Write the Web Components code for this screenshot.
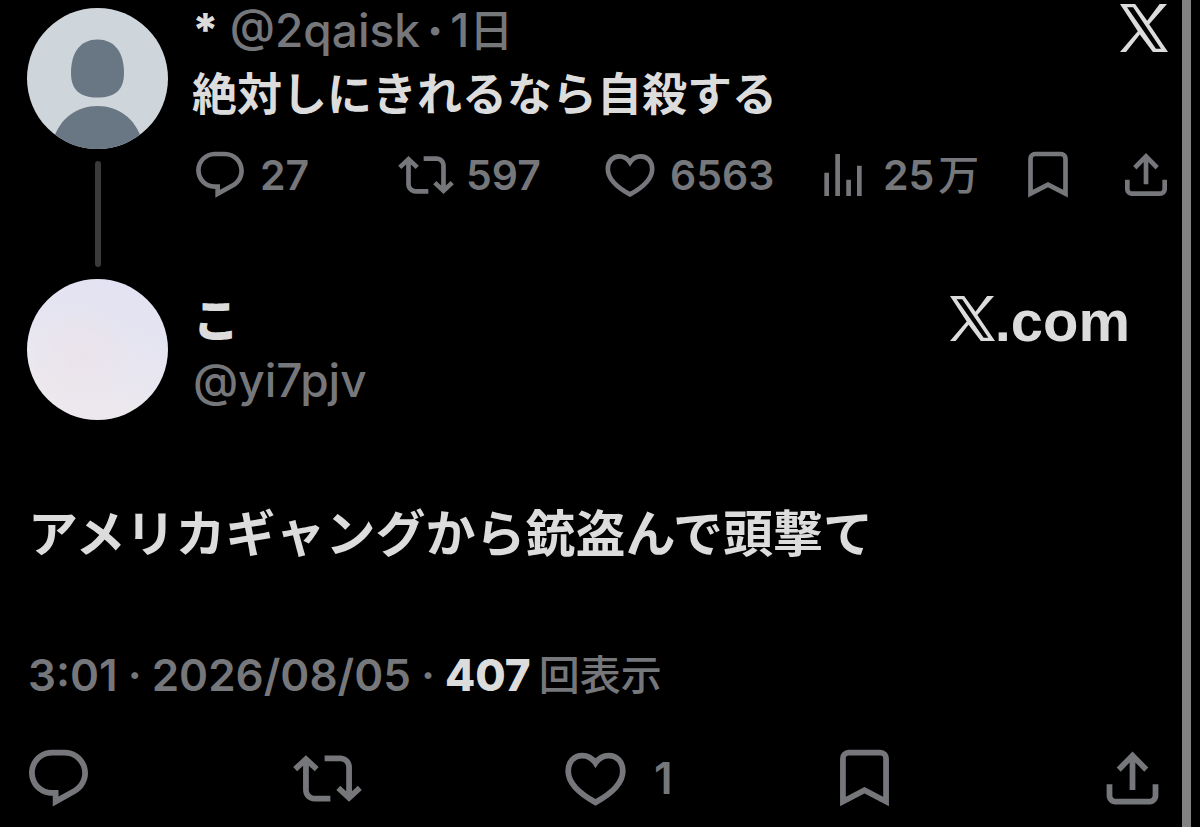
<!DOCTYPE html>
<html lang="ja">
<head>
<meta charset="utf-8">
<meta name="viewport" content="width=device-width, initial-scale=1">
<title>Thread</title>
<style>
  body {
    margin: 0;
    background: #000;
    color: #dcdcdc;
    font-family: Inter, "Noto Sans CJK JP", sans-serif;
    font-weight: 500;
  }
</style>
</head>
<body>
<thread-page>
  <thread-post>
    <default-avatar slot="avatar"></default-avatar>
    <post-author slot="author" name="*" handle="@2qaisk" age="1" unit="日"></post-author>
    <x-logo slot="logo"></x-logo>
    絶対しにきれるなら自殺する
    <action-bar slot="actions" class="compact">
      <action-button icon="reply" label="返信">27</action-button>
      <action-button icon="repost" label="リポスト">597</action-button>
      <action-button icon="like" label="いいね">6563</action-button>
      <action-button icon="views" label="表示">25<span>万</span></action-button>
      <action-button icon="bookmark" label="ブックマーク"></action-button>
      <action-button icon="share" label="共有"></action-button>
    </action-bar>
  </thread-post>

  <focal-post name="こ" handle="@yi7pjv">
    アメリカギャングから銃盗んで頭撃て
    <post-meta slot="meta" time="3:01" date="2026/08/05" views="407"></post-meta>
    <action-bar slot="actions">
      <action-button icon="reply" label="返信"></action-button>
      <action-button icon="repost" label="リポスト"></action-button>
      <action-button icon="like" label="いいね">1</action-button>
      <action-button icon="bookmark" label="ブックマーク"></action-button>
      <action-button icon="share" label="共有"></action-button>
    </action-bar>
  </focal-post>
</thread-page>

<script>
const GREY = "#76777b";

const icons = {
  reply: `<path d="M1.751 10c0-4.42 3.584-8 8.005-8h4.366c4.49 0 8.129 3.64 8.129 8.13 0 2.96-1.607 5.68-4.196 7.11l-8.054 4.46v-3.69h-.067c-4.49.1-8.183-3.51-8.183-8.01zm8.005-6c-3.317 0-6.005 2.69-6.005 6 0 3.37 2.77 6.08 6.138 6.01l.351-.01h1.761v2.3l5.087-2.81c1.951-1.08 3.163-3.13 3.163-5.36 0-3.39-2.744-6.13-6.129-6.13H9.756z"/>`,
  repost: `<path d="M4.5 3.88l4.432 4.14-1.364 1.46L5.5 7.55V16c0 1.1.896 2 2 2H13v2H7.5c-2.209 0-4-1.79-4-4V7.55L1.432 9.48.068 8.02 4.5 3.88zM16.5 6H11V4h5.5c2.209 0 4 1.79 4 4v8.45l2.068-1.93 1.364 1.46-4.432 4.14-4.432-4.14 1.364-1.46 2.068 1.93V8c0-1.1-.896-2-2-2z"/>`,
  like: `<path fill="none" stroke="currentColor" stroke-width="2" stroke-miterlimit="10" d="M12 6.6C10.9 4.9 9.3 4 7.4 4 4.5 4 2.5 6.3 2.5 9.4 2.5 14 6.7 17.4 12 20.3c5.3-2.9 9.5-6.3 9.5-10.9C21.5 6.3 19.5 4 16.6 4 14.7 4 13.1 4.9 12 6.6z"/>`,
  views: `<path d="M4 11h2v10H4zM8.7 3h2v18h-2zM13.4 14h2v7h-2zM18 8h2v13h-2z"/>`,
  bookmark: `<path fill="none" stroke="currentColor" stroke-width="2" stroke-miterlimit="10" d="M4.5 5c0-1.1.9-2 2-2h11c1.1 0 2 .9 2 2v15L12 16.1 4.5 20z"/>`,
  share: `<path d="M12 2.59l5.5 5.6-1.41 1.42L13 6.41V16h-2V6.41L7.9 9.61 6.5 8.19zM21 14v4c0 1.66-1.34 3-3 3H6c-1.66 0-3-1.34-3-3v-4h2v4c0 .55.45 1 1 1h12c.55 0 1-.45 1-1v-4z"/>`
};

function render(el, html) {
  el.attachShadow({ mode: "open" });
  const template = document.createElement("template");
  template.innerHTML = html;
  el.shadowRoot.appendChild(template.content.cloneNode(true));
}

class ThreadPage extends HTMLElement {
  constructor() {
    super();
    render(this, `
      <style>
        :host {
          display: block;
          box-sizing: border-box;
          min-height: 100vh;
          padding-right: 9px;
          background: #000;
        }
        main {
          box-sizing: border-box;
          min-height: 100vh;
          border-right: 9px solid #828282;
        }
      </style>
      <main><slot></slot></main>
    `);
  }
}

class XLogo extends HTMLElement {
  constructor() {
    super();
    render(this, `
      <style>
        :host { display: block; width: 48px; flex: none; }
        svg { display: block; width: 100%; fill: currentColor; }
      </style>
      <svg viewBox="0 0 143 143" role="img" aria-label="X">
        <path fill-rule="evenodd" d="M0 0H45L81 50 118 0H140L87 60 143 143H98L59 91 18 143H0L53 81zM21 10 107 133H122L39 10z"/>
      </svg>
    `);
  }
}

class DefaultAvatar extends HTMLElement {
  constructor() {
    super();
    render(this, `
      <style>
        :host { display: block; width: 141px; border-radius: 50%; overflow: hidden; }
        svg { display: block; width: 100%; }
      </style>
      <svg viewBox="0 0 141 141" role="img" aria-label="avatar">
        <path fill="#ced5db" d="M0 0h141v141H0z"/>
        <path fill="#697683" d="M70.5 31.5C88 31.5 97 45 97 65C97 82 88 89.5 70.5 89.5S44 82 44 65C44 45 53 31.5 70.5 31.5z"/>
        <path fill="#697683" d="M26 132C33 110 50 98 70.5 98S108 110 115 132V141H26z"/>
      </svg>
    `);
  }
}

class PostAuthor extends HTMLElement {
  constructor() {
    super();
    render(this, `
      <style>
        :host { display: flex; gap: 7px; font-size: 46px; line-height: 60px; color: ${GREY}; white-space: nowrap; }
        b { color: #dcdcdc; font-weight: 800; margin-right: 4px; }
        .dot { font-weight: 800; }
        .unit { font-size: 44px; }
      </style>
      <b>${this.getAttribute("name")}</b>
      <span>${this.getAttribute("handle")}</span>
      <span class="dot">·</span>
      <time>${this.getAttribute("age")}<span class="unit">${this.getAttribute("unit")}</span></time>
    `);
  }
}

class ThreadPost extends HTMLElement {
  constructor() {
    super();
    render(this, `
      <style>
        :host { display: block; }
        article { display: flex; gap: 24px; padding: 0 8px 0 27px; }
        .rail { display: flex; flex-direction: column; align-items: center; flex: none; padding: 8px 0 12px; gap: 12px; }
        .line { width: 6px; min-height: 106px; flex: 1; border-radius: 3px; background: #3a3a3c; }
        .content { flex: 1; min-width: 0; }
        header { display: flex; justify-content: space-between; padding-right: 6px; }
        ::slotted(x-logo) { margin-top: 4px; }
        p { margin: 0 0 18px; font-size: 45px; font-weight: 700; line-height: 68px; }
      </style>
      <article>
        <div class="rail">
          <slot name="avatar"></slot>
          <div class="line"></div>
        </div>
        <div class="content">
          <header>
            <slot name="author"></slot>
            <slot name="logo"></slot>
          </header>
          <p><slot></slot></p>
          <slot name="actions"></slot>
        </div>
      </article>
    `);
  }
}

class FocalPost extends HTMLElement {
  constructor() {
    super();
    render(this, `
      <style>
        :host { display: block; }
        header { display: flex; align-items: center; gap: 25px; padding: 0 52px 0 27px; }
        .photo {
          width: 141px;
          height: 141px;
          flex: none;
          border-radius: 50%;
          background: radial-gradient(circle at 38% 55%, #ebe3ea 0%, transparent 45%), linear-gradient(200deg, #e2e2f2 10%, #e6e5f1 45%, #ece8ee 75%);
        }
        .names { flex: 1; font-size: 46px; line-height: 60px; }
        .name { font-weight: 800; }
        .handle { color: ${GREY}; }
        .brand {
          display: flex;
          align-items: baseline;
          align-self: flex-start;
          color: #dcdcdc;
          font-family: "Liberation Sans", Arial, sans-serif;
          font-size: 58px;
          font-weight: 700;
          line-height: 84px;
          text-decoration: none;
        }
        .brand x-logo { width: 45px; }
        p { margin: 79px 28px 76px; font-size: 50px; font-weight: 700; line-height: 70px; }
      </style>
      <article>
        <header>
          <div class="photo"></div>
          <div class="names">
            <div class="name">${this.getAttribute("name")}</div>
            <div class="handle">${this.getAttribute("handle")}</div>
          </div>
          <a class="brand" href="#"><x-logo></x-logo>.com</a>
        </header>
        <p><slot></slot></p>
        <slot name="meta"></slot>
        <slot name="actions"></slot>
      </article>
    `);
  }
}

class PostMeta extends HTMLElement {
  constructor() {
    super();
    render(this, `
      <style>
        :host { display: flex; gap: 10px; margin: 0 28px 39px; font-size: 44px; font-weight: 600; line-height: 60px; color: ${GREY}; }
        .views { display: flex; gap: 8px; }
        b { color: #dcdcdc; font-weight: 800; }
        .unit { font-size: 41px; font-weight: 500; }
      </style>
      <time>${this.getAttribute("time")}</time>
      <span>·</span>
      <time>${this.getAttribute("date")}</time>
      <span>·</span>
      <span class="views"><b>${this.getAttribute("views")}</b><span class="unit">回表示</span></span>
    `);
  }
}

class ActionBar extends HTMLElement {
  constructor() {
    super();
    render(this, `
      <style>
        :host {
          --icon: 69px;
          --count: 44px;
          --count-gap: 24px;
          display: grid;
          grid-template-columns: repeat(4, 1fr) var(--icon);
          padding: 0 15px 0 24px;
        }
        :host(.compact) {
          --icon: 56px;
          --count: 41px;
          --count-gap: 12px;
          grid-template-columns: 206fr 204fr 213fr 205fr 98fr var(--icon);
          padding: 0;
        }
      </style>
      <slot></slot>
    `);
  }
}

class ActionButton extends HTMLElement {
  constructor() {
    super();
    render(this, `
      <style>
        :host { display: block; min-width: 0; }
        button {
          display: flex;
          align-items: center;
          gap: var(--count-gap);
          padding: 0;
          border: 0;
          background: none;
          color: ${GREY};
          font: inherit;
          font-size: var(--count);
          font-weight: 600;
          line-height: var(--icon);
          white-space: nowrap;
          cursor: pointer;
        }
        svg { width: var(--icon); height: var(--icon); flex: none; fill: currentColor; }
        ::slotted(span) { margin-left: 4px; font-weight: 500; }
      </style>
      <button type="button" aria-label="${this.getAttribute("label")}">
        <svg viewBox="0 0 24 24" aria-hidden="true">${icons[this.getAttribute("icon")]}</svg>
        <div><slot></slot></div>
      </button>
    `);
  }
}

customElements.define("x-logo", XLogo);
customElements.define("default-avatar", DefaultAvatar);
customElements.define("post-author", PostAuthor);
customElements.define("post-meta", PostMeta);
customElements.define("action-button", ActionButton);
customElements.define("action-bar", ActionBar);
customElements.define("thread-post", ThreadPost);
customElements.define("focal-post", FocalPost);
customElements.define("thread-page", ThreadPage);
</script>
</body>
</html>
